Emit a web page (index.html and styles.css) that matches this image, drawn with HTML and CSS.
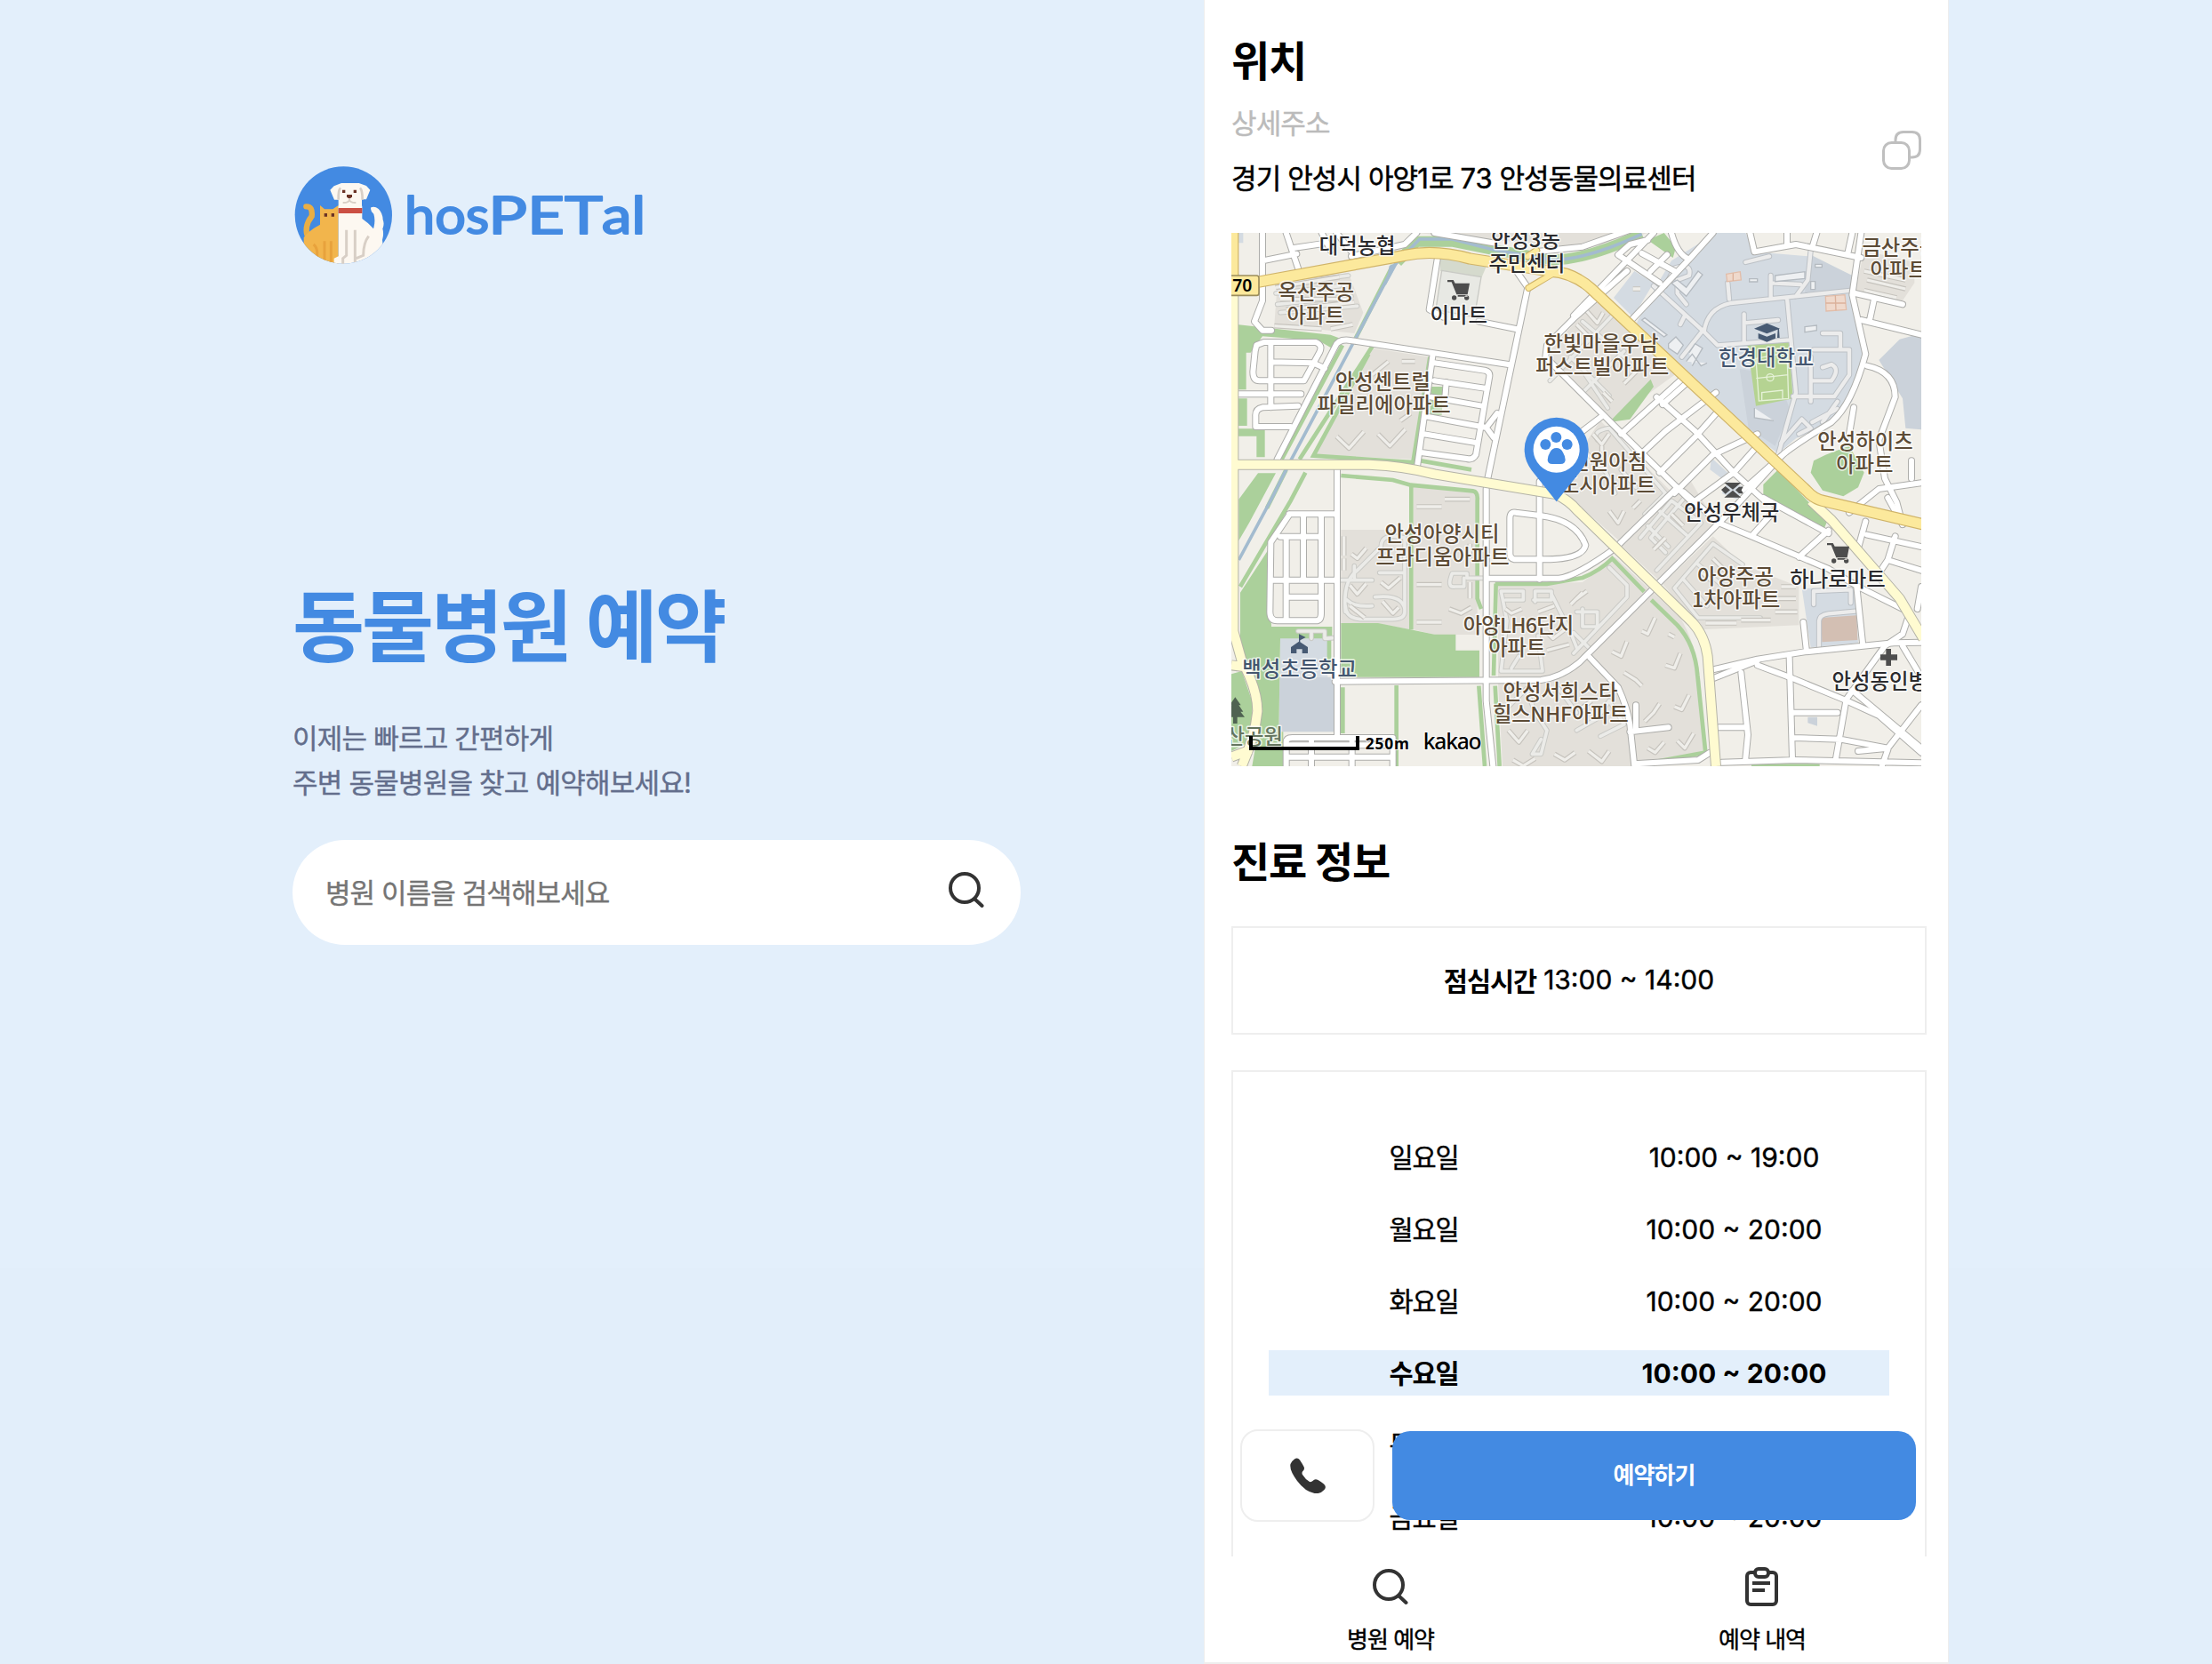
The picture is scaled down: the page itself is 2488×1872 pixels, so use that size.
FILE: index.html
```html
<!DOCTYPE html>
<html lang="ko">
<head>
<meta charset="utf-8">
<title>hosPETal</title>
<link rel="stylesheet" href="styles.css">
</head>
<body>
<main class="hero">
  <svg class="logo" viewBox="57 51 1200 330" role="img" aria-label="hosPETal">
    <defs><clipPath id="disc"><circle cx="229" cy="216" r="164"/></clipPath></defs>
    <circle cx="229" cy="216" r="164" fill="#438ae2"/>
    <g clip-path="url(#disc)">
      <path d="M103 187 Q126 186 122 220 Q98 250 106 282" fill="none" stroke="#e9ae45" stroke-width="19" stroke-linecap="round"/>
      <path d="M150 183 L165 196 H193 L212 183 V385 H95 V292 Q112 268 150 248Z" fill="#f2b54c"/>
      <path d="M128 315 Q142 326 140 350 V380 M165 304 V380 M187 304 V380" fill="none" stroke="#e8a23c" stroke-width="9"/>
      <path d="M164 210h10v11h-10zM188 210h10v11h-10z" fill="#6b3325"/>
      <path d="M212 185 H292 V228 Q315 244 330 262 Q338 235 331 212 Q318 200 322 190 Q334 184 347 195 Q361 208 362 232 Q368 245 361 262 Q366 280 360 300 L370 385 H197 V362 L212 355Z" fill="#fdf8f1"/>
      <path d="M222 108 H281 L306 117 L319 131 L306 163 H291 V194 H212 V164 H198 L184 131 L197 118Z" fill="#fdf8f1"/>
      <path d="M219 124 Q211 132 212 164 M285 124 Q293 132 293 164" fill="none" stroke="#d8cfc6" stroke-width="8"/>
      <path d="M249 157 V165 Q246 175 227 174 M249 165 Q253 175 271 174" fill="none" stroke="#d8cfc6" stroke-width="6"/>
      <path d="M225 131h10v10h-10zM263 131h10v10h-10z" fill="#6b3325"/>
      <path d="M240 147 H258 V154 L253 159 H245 L240 154Z" fill="#6b3325"/>
      <path d="M212 192H292V210H212z" fill="#cb4f43"/>
      <path d="M239 266 V352 L227 362 V382 M268 266 V375 M314 287 Q296 310 296 352 L272 362" fill="none" stroke="#d8cfc6" stroke-width="9"/>
    </g>
    <g class="wordmark">
      <text x="435" y="279" textLength="286" lengthAdjust="spacingAndGlyphs">hos</text>
      <text x="718" y="279" textLength="386" lengthAdjust="spacingAndGlyphs">PET</text>
      <text x="1100" y="279" textLength="149" lengthAdjust="spacingAndGlyphs">al</text>
    </g>
  </svg>

  <h1 class="hero-title">동물병원 예약</h1>
  <p class="hero-copy">이제는 빠르고 간편하게<br>주변 동물병원을 찾고 예약해보세요!</p>
  <div class="search">
    <span class="search-hint">병원 이름을 검색해보세요</span>
    <svg class="icon" viewBox="0 0 40 40"><circle cx="18" cy="18" r="16"/><path d="M30 31 L37.5 38"/></svg>
  </div>
</main>

<section class="panel">
  <div class="content">
    <h2 class="heading">위치</h2>
    <div class="address-row">
      <div>
        <p class="address-label">상세주소</p>
        <p class="address">경기 안성시 아양<span class="num">1</span>로 <span class="num">73</span> 안성동물의료센터</p>
      </div>
      <svg class="copy" viewBox="0 0 44 44"><path d="M15 12 V10.5 Q15 1.5 24 1.5 H33.5 Q42.500 1.500 42.500 10.500 V21 Q42.500 30 33.500 30 H32"/><rect x="1.500" y="13.500" width="29" height="29" rx="9"/></svg>
    </div>

    <svg class="map" viewBox="15 21 2328 1800">
      <defs>
        <g id="paths">
          <path d="M170 195L410 165M165 225L380 200M170 262L420 235M180 290L440 268"/>
          <path d="M1090 520L1300 300M1200 560L1340 420M1160 440L1290 570M1200 320L1340 440M1210 500L1285 612"/>
          <path d="M400 1300Q390 1195 440 1160L520 1080Q520 1030 600 1050V1300Q600 1325 560 1325H450Q400 1320 400 1280M385 1193H490M430 1190V1145M515 1168H600M500 1250Q590 1240 600 1290M405 1260Q430 1285 490 1280"/>
          <path d="M865 1186H810V1170H760Q740 1220 770 1215H800V1186"/>
          <path d="M925 1230H1000V1260H940M925 1230L945 1330L925 1500H1065L1050 1380M1035 1260H1095V1230H1040V1265M1095 1240L1160 1370L1180 1420M960 1490L985 1450"/>
          <path d="M930 1640L1010 1560L1040 1640L1080 1700L1060 1780H1030L1060 1730M1120 1560L1180 1640M1180 1700L1250 1660L1290 1600L1340 1680L1260 1720M1180 1300H1250V1350H1200V1290M1170 1440L1350 1250V1210L1290 1150M1170 1370L1220 1420"/>
          <path d="M1395 1050L1500 925L1600 1000L1450 1160M1420 1010L1490 1080M1460 960L1550 1040M1540 920L1430 1050L1480 1100M1510 1220L1640 1070L1740 1140M1510 1220L1590 1320H1800M1540 1190L1620 1280M1590 1140L1670 1210"/>
          <path d="M1250 720Q1230 690 1290 680L1480 900L1410 970M1210 760L1280 830L1310 900M1330 820L1380 880"/>
          <path d="M240 1365H330V1390L360 1388M285 1365V1390"/>
        </g>
        <g id="campus">
          <path d="M1440 200L1610 355L1655 400L1900 382M1610 355Q1620 275 1700 258L2110 215M1610 345L1535 440M1480 200L1510 140Q1570 120 1560 165L1520 180V225L1550 262M1890 240L1920 560L1860 770M1970 80L1960 180L1920 235M1835 165V240M1835 190L1935 195M1745 295V390M1745 325L1860 315M1690 190L1695 245M1530 330L1545 300"/>
          <path d="M1910 573H2050L2100 500V415H1980M2070 410V360H2010M1970 440V590M1970 520H2040Q2070 480 2040 465L2010 475M1975 660L2060 615M1870 730L1940 650L1970 680L1930 700M2060 590L2010 660M1750 120L1830 100"/>
          <path d="M1980 1275V1230L2105 1225V1270M1998 1418V1330Q2000 1310 2030 1306L2120 1298"/>
        </g>
        <g id="streets">
          <path d="M120 21V250L93 320L120 350H150M200 21L240 140M120 115L235 92M225 72L320 58M320 21L350 80M420 100L600 60L640 21M370 21L425 90"/>
          <path d="M710 110L683 280L730 305M850 320L975 345M970 140L1015 205L880 850M700 21L900 55M1040 85L1200 68L1420 -10"/>
          <path d="M100 400L125 390H300Q325 400 312 425L260 520H110Q88 520 88 490L95 420ZM148 390V610M148 457L290 460L330 478M30 565H250M240 605L120 610Q95 615 97 640V675H215M170 785L365 405Q375 380 410 383L950 465"/>
          <path d="M695 430L642 810M700 460L870 485Q890 490 885 510L840 770Q830 788 810 783L655 762M700 520L870 545M740 525L735 590M690 575L860 605M670 640L875 678L912 630M665 700L845 730M875 678L900 712"/>
          <path d="M372 820V1718M875 885V1600L898 1821M1055 860V1190M210 970H372M212 970L148 1065L145 1300Q145 1330 170 1330H300Q318 1330 318 1305V970M258 970V1193M180 1046H310M150 1193H372M200 1050V1320M200 1250H318"/>
          <path d="M955 985Q955 960 975 965L1055 975Q1180 990 1210 1075Q1200 1125 1060 1123H970Q955 1120 955 1105ZM885 1187H1120Q1180 1180 1310 1085L1520 880M365 1535L1060 1530Q1130 1520 1190 1470L1715 945L1870 775Q1900 745 2040 660Q2110 600 2155 430L2110 230L2140 21"/>
          <path d="M200 1821V1740Q200 1725 220 1725H560V1821M200 1750H560M285 1725V1821M200 1790H560M422 1725V1821"/>
          <path d="M1350 150L1170 310L1080 400L1075 440L1330 695L1580 940M1170 300L1440 21M1370 310L1560 110L1640 21M1320 95L1460 190M1320 95L1360 60L1420 45M1400 90L1510 150M1430 150L1485 95M1500 21Q1520 95 1560 110"/>
          <path d="M1450 575L1580 690L1710 830L1820 930M1330 700L1540 510M1200 690L1265 640M1395 770L1480 690L1650 560M1460 830L1580 710L1660 620M1510 900L1640 770L1790 700M1560 940L1710 830L1790 740M1470 600L1560 520M1740 890L1870 775"/>
          <path d="M1765 21L1780 85L1920 60L2140 105M1890 21V60M1990 21L1975 70M2110 21L2095 90M2120 225L2280 262M2185 240L2170 310M2140 315L2343 365M2160 470Q2255 490 2255 575L2200 720L2220 850L2260 930L2280 1005M2115 610L2100 700M2310 790V850M2100 965L2200 885L2343 865"/>
          <path d="M1540 895L1660 1000L1770 1045L2030 1155L2130 1215L2290 1295M1770 1045L1860 945M1930 1115L2030 1025M1810 915L2030 1035M2125 1215L2145 1405M1945 1335L1955 1425M1640 1495L1790 1460L1950 1435L2250 1405L2343 1403M1640 1525L1790 1465M1790 1480L1910 1525L2080 1595L2200 1650L2343 1775"/>
          <path d="M1735 1505L1758 1715L1750 1795M1898 1455L1908 1795M1660 1690H1750M1910 1640H2060M1910 1725L2070 1730L2230 1760L2130 1770M2220 1415L2090 1595L2055 1795M2280 1415L2343 1520M2110 1565L2343 1760M2230 1765L2210 1821M2343 1615L2230 1760M1670 1808L1920 1800L2343 1810M2300 1315L2280 1375L2220 1415"/>
          <path d="M2155 995L2130 1085M2160 1040L2343 1080M2230 915L2280 1005M2255 1045L2230 1125L2343 1160M2230 1125L2210 1155M2343 1215L2330 1290M1225 1455L1320 1555Q1350 1620 1360 1680L1375 1821M1360 1705L1490 1690M1380 1615V1700M1375 1813L1590 1800L1630 1775"/>
        </g>
        <path id="pale" d="M22 160V1365L50 1465Q103 1560 103 1635Q95 1720 50 1821M15 1480L55 1485M15 1790L80 1765M20 803H480Q600 808 700 835L1110 903Q1155 925 1180 955L1570 1335Q1612 1380 1622 1450L1650 1821M1970 925L2040 990L2270 1255L2350 1390"/>
        <path id="trunk" d="M20 21V200M60 195L600 97Q700 75 820 108L1090 150Q1170 155 1230 210L1955 890Q1980 918 2010 925L2350 1005"/>
        <g id="houses">
          <path d="M165 205L380 170M180 245H410M200 280L430 255M160 335L320 345M350 345L425 330"/>
          <path d="M370 708L412 748L462 692M510 700L550 740L602 684M490 500L545 455M590 455H635M585 655L620 630"/>
          <path d="M640 945H725M640 1208H725M640 1335H725M735 920H820M820 1070V1120M820 1200V1255M750 1290L790 1305L825 1285M395 1045V1110M395 1120V1160M420 1105L440 1120L470 1085M520 1200L545 1220L585 1185M415 1210L440 1240L470 1205M415 1280L465 1320M525 1265L560 1305L580 1285"/>
          <path d="M940 1290L960 1305L995 1290M1050 1300L1105 1280M1080 1430L1155 1410M1080 1370L1100 1390L1140 1360M950 1700L985 1740L1015 1700M1105 1780L1140 1800L1175 1775M965 1800L1000 1820L1040 1795"/>
          <path d="M1175 1260L1215 1230M1160 1275L1200 1235M1445 1320L1420 1375L1400 1365M1350 1400L1330 1450L1300 1435M1490 1375L1510 1385M1530 1440L1510 1490L1480 1480M1340 1505L1380 1530L1400 1550M1410 1670L1440 1640L1460 1610M1510 1620L1535 1630L1560 1580M1420 1760L1445 1775L1475 1740M1520 1735L1545 1760L1575 1710M1220 1770L1265 1805L1290 1770M1190 1630L1230 1600"/>
          <path d="M1615 1338H1720M1735 1328H1835M1850 1300H1925M1850 1255H1920M1870 1215H1920M1600 1165L1635 1195M1640 1120L1680 1160M1440 1090L1480 1050M1500 970L1540 1010"/>
          <path d="M1210 280L1250 325L1270 290M1180 330L1220 370M1270 560L1300 590M1340 530L1390 480M1235 700L1265 735L1290 700M1265 740V760M1290 960L1320 1000L1340 960M1370 950L1395 925"/>
          <path d="M2160 180L2290 210M2150 150L2290 180M2150 215L2260 240M1370 210H1395"/>
        </g>
      </defs>

      <rect x="15" y="21" width="2328" height="1800" fill="#f1efe9"/>
      <g fill="#e3e0da">
        <path d="M170 195L410 155L460 290L430 360L160 330ZM490 410L685 440L635 785L295 770ZM640 21H1420L1300 60L1190 70L900 45ZM1075 435L1250 240L1525 490L1290 660Z"/>
        <path d="M385 1023H620V1360L510 1340L385 1338ZM630 875L845 895V1377H700L630 1360ZM1260 655L1510 905L1340 1075L1200 950L1110 880Z"/>
        <path d="M1330 1075L1560 850L1650 1000L1470 1205ZM1470 1205L1640 1045L1740 1140L1930 1215V1345L1600 1360ZM915 1210L1200 1200L1310 1115L1530 1320Q1590 1420 1600 1560L1610 1780L1375 1821H930L915 1540ZM2150 80L2320 120V190L2270 265L2120 220Z"/>
      </g>
      <g fill="#d4dbe2">
        <path d="M1500 115L1650 21H1750L1780 85L1960 100L2110 165V220L2145 420L2110 590Q2060 650 1920 715L1860 765L1770 700L1380 330L1455 190ZM1305 240L1375 150L1440 190L1370 305Z"/>
        <path d="M180 1352H340V1520H180ZM1940 1220H2120L2130 1405L1970 1420ZM1635 780L1690 830L1670 850L1630 820ZM1690 860L1750 880L1720 920L1670 900ZM15 21H55V55H20Z"/>
      </g>
      <path d="M2343 360L2270 380L2200 450L2280 580L2290 680L2343 685ZM178 1520H360V1705H175ZM1730 480L1860 500L1900 620L1850 740L1760 680ZM1960 90L2110 165V210L1950 225ZM1960 1655H1992V1685L1960 1675Z" fill="#cbd2da"/>
      <path d="M720 105L875 135L860 170L720 150Z" fill="#d5dacd"/>
      <path d="M725 148L858 170L835 305L705 280Z" fill="#e8e9e4" stroke="#c9cac5" stroke-width="4"/>
      <path d="M2005 1320L2125 1312L2128 1395L2008 1402Z" fill="#d3bfb3"/>

      <g fill="#abd09b">
        <path d="M33 330L350 365L390 380L350 408L310 385L120 370L80 425H65V550H33ZM35 580H68V672H35ZM33 682H128V778H100V707H33ZM690 540H730L725 635H685ZM105 832H165L75 1000L40 1060V920Z"/>
        <path d="M45 1235L140 1090L150 1350H355V1390H180L175 1705H190V1821H85L115 1645L45 1430ZM15 1510L50 1500L88 1610L75 1740L15 1770Z"/>
        <path d="M385 1338H510L620 1360L700 1376H772V1430H852V1520H385Z"/>
        <path d="M1420 45L1475 21L1515 70L1505 105ZM1430 515L1440 540L1360 650L1290 660ZM1810 870L1860 820L2025 995L2015 1020L1810 910ZM2020 770L1980 790L1970 830L2010 890L2080 910L2130 880L2150 830L2100 740Z"/>
      </g>
      <g class="belt">
        <path d="M560 130L430 385M390 400L185 785M490 405L245 785M478 430L292 773L628 795L685 440M655 790L825 820M265 830L215 925L45 1215M200 820L135 950"/>
        <path d="M385 840L560 855L620 872L830 892Q848 895 845 925V1255L858 1290M622 870V1360M908 1205L900 1515M850 1550L870 1821M905 1550L920 1821M572 1548V1821M391 1555V1710M345 1350V1510"/>
        <path d="M905 1206H1080L1200 1185Q1260 1160 1300 1120L1408 1232M1432 1260L1520 1345Q1580 1410 1588 1515L1615 1775L1395 1815M1770 1820H2000"/>
      </g>
      <path d="M575 120L640 50L760 50L900 78L1100 112Q1220 110 1400 25" fill="none" stroke="#abd09b" stroke-width="36"/>
      <path d="M40 1125L150 920L215 790L430 385L565 130L650 42H760L900 78L1100 112Q1220 110 1400 25" fill="none" stroke="#a3bbcf" stroke-width="11"/>
      <path d="M548 132L580 118L535 200Z" fill="#a3bbcf"/>

      <path d="M1755 390L1895 375L1910 580L1785 605Z" fill="#b5d392"/>
      <path d="M1785 445L1890 425L1895 580L1795 588ZM1786 512L1893 500M1805 588V560L1875 552V582" fill="none" stroke="#e6f2d8" stroke-width="4"/>
      <circle cx="1833" cy="509" r="12" fill="none" stroke="#e6f2d8" stroke-width="4"/>

      <use href="#paths" class="path-case"/><use href="#paths" class="path-fill"/>
      <use href="#campus" class="campus-case"/><use href="#campus" class="campus-fill"/>
      <use href="#houses" class="house-case"/><use href="#houses" class="house-fill"/>
      <g fill="#eef0f2" stroke="#b4bac0" stroke-width="4">
        <path d="M1500 190L1520 180L1550 205L1590 150L1605 162L1550 235ZM1400 315L1410 308L1485 365L1475 372ZM1850 165L1950 152V175L1850 185ZM1490 395L1515 372L1540 400L1520 430L1490 410ZM1970 185H1985V212H1970ZM1950 338L1990 333V350L1950 356ZM1780 612V645L1845 655M1763 176H1790V186H1763ZM1550 455L1570 430L1600 470L1620 460M1560 425L1580 395L1605 410L1570 470M1985 127H2008V137H1985Z"/>
      </g>
      <path d="M1685 160L1732 152L1735 180L1688 185ZM2020 235L2085 230L2090 280L2022 285Z" fill="#efd9cc" stroke="#e2bda9" stroke-width="4"/>
      <path d="M2053 232L2055 283M2020 258H2088M1708 157V183" stroke="#dbb19b" stroke-width="4"/>

      <use href="#streets" class="street-case"/><use href="#streets" class="street-fill"/>
      <use href="#pale" class="pale-case"/><use href="#pale" class="pale-fill"/>
      <path d="M1018 207L1100 158M1015 100L1045 80" stroke="#d0b469" stroke-width="24" stroke-linecap="round"/>
      <use href="#trunk" class="trunk-case"/><use href="#trunk" class="trunk-fill"/>
      <path d="M1018 207L1105 156M1015 100L1045 80" stroke="#fce99c" stroke-width="17" stroke-linecap="round"/>

      <rect x="-10" y="165" width="118" height="67" rx="8" fill="#fce99c" stroke="#9b8d5c" stroke-width="5"/>
      <text class="badge" x="52" y="218">70</text>

      <g fill="#4d4d4d">
        <path id="cart" d="M744 180H764L770 191H819L812 229H775L758 187H744ZM779 231H812V236H779ZM759 240a8 8 0 1 0 16 0a8 8 0 1 0-16 0M801 240a8 8 0 1 0 16 0a8 8 0 1 0-16 0"/>
        <use href="#cart" x="1281" y="888"/>
        <path d="M1678 864H1735L1707 887ZM1678 914H1735L1707 890ZM1668 888L1682 876L1698 889L1682 902ZM1716 889L1728 878H1742L1736 889L1742 900H1728Z"/>
        <path d="M2224 1425H2241V1444H2262V1463H2241V1482H2224V1463H2205V1444H2224Z"/>
      </g>
      <g fill="#475a73">
        <path d="M1779 344L1822 326L1866 344L1822 361ZM1793 360L1822 371L1851 360V377L1822 389L1793 377ZM1859 346H1863L1865 375H1857Z"/>
        <path d="M243 1375L266 1386L247 1396V1402L273 1419V1440H254V1426H235V1440H216V1419L243 1400Z"/>
      </g>
      <path d="M28 1588L47 1615H40L55 1637H46L60 1655H35V1677H21V1655H-5L8 1637H1L16 1615H9Z" fill="#506352"/>

      <g class="place apt">
        <text x="301" y="246">옥산주공</text><text x="299" y="324">아파트</text>
        <text x="526" y="548">안성센트럴</text><text x="530" y="626">파밀리에아파트</text>
        <text x="1263" y="419">한빛마을우남</text><text x="1266" y="497">퍼스트빌아파트</text>
        <text x="2154" y="749">안성하이츠</text><text x="2152" y="828">아파트</text>
        <text x="1288" y="818">신원아침</text><text x="1285" y="897">도시아파트</text>
        <text x="726" y="1061">안성아양시티</text><text x="728" y="1139">프라디움아파트</text>
        <text x="984" y="1370" textLength="374">아양LH6단지</text><text x="979" y="1446">아파트</text>
        <text x="1125" y="1596">안성서희스타</text><text x="1126" y="1672" textLength="458">힐스NHF아파트</text>
        <text x="1716" y="1207">아양주공</text><text x="1718" y="1284">1차아파트</text>
        <text x="2272" y="97">금산주공</text><text x="2267" y="172">아파트</text>
      </g>
      <g class="place poi">
        <text x="440" y="89">대덕농협</text><text x="1008" y="68">안성3동</text><text x="1012" y="151">주민센터</text>
        <text x="782" y="324">이마트</text><text x="1703" y="991">안성우체국</text><text x="2061" y="1214">하나로마트</text><text x="2235" y="1559">안성동인병원</text>
      </g>
      <g class="place school"><text x="1820" y="467">한경대학교</text><text x="245" y="1519">백성초등학교</text></g>
      <g class="place park"><text x="92" y="1747">산공원</text></g>

      <path d="M81 1719V1761H441V1719" fill="none" stroke="#000" stroke-width="12"/>
      <text class="scale" x="467" y="1765" textLength="148">250m</text>
      <text class="brand" x="662" y="1765" textLength="198">kakao</text>

      <path d="M1112 928L1028 822Q1004 790 1004 752A108 108 0 0 1 1220 752Q1220 790 1196 822Z" fill="#438ae2"/>
      <circle cx="1112" cy="752" r="78" fill="#fff"/>
      <g fill="#438ae2"><circle cx="1075" cy="735" r="18"/><circle cx="1111" cy="711" r="18"/><circle cx="1148" cy="735" r="18"/>
      <path d="M1112 747Q1127 747 1134 762Q1142 775 1142 787Q1142 801 1126 801H1098Q1082 801 1082 787Q1082 775 1090 762Q1097 747 1112 747Z"/></g>
    </svg>

    <h2 class="heading info">진료 정보</h2>
    <div class="box lunch"><strong>점심시간</strong><span class="time">13:00 ~ 14:00</span></div>
    <div class="box hours">
      <div class="day"><span>일요일</span><span class="time">10:00 ~ 19:00</span></div>
      <div class="day"><span>월요일</span><span class="time">10:00 ~ 20:00</span></div>
      <div class="day"><span>화요일</span><span class="time">10:00 ~ 20:00</span></div>
      <div class="day today"><span>수요일</span><span class="time">10:00 ~ 20:00</span></div>
      <div class="day"><span>목요일</span><span class="time">10:00 ~ 20:00</span></div>
      <div class="day"><span>금요일</span><span class="time">10:00 ~ 20:00</span></div>
      <div class="day"><span>토요일</span><span class="time">10:00 ~ 19:00</span></div>
    </div>
  </div>

  <div class="actions">
    <div class="call"><svg viewBox="0 0 40 40"><path d="M5 1.500Q8.500-1 11 2.500Q14 7 15.500 10Q17 13 14 15.500Q13 17 14 19Q17 24 22 27Q24 27.500 25.500 26Q28 23 31.500 25Q35 27 38 29.500Q41.500 32.500 38.500 36Q34 41 27.500 40Q17 38 8 26Q-1 14 .5 7Q1.500 4 5 1.500Z" fill="#333"/></svg></div>
    <div class="reserve">예약하기</div>
  </div>
  <nav class="tabs">
    <div class="tab"><svg class="icon" viewBox="0 0 40 40"><circle cx="18" cy="18" r="16"/><path d="M30 31 L37.500 38"/></svg><span>병원 예약</span></div>
    <div class="tab"><svg class="clip" viewBox="0 0 38 44"><rect x="2" y="6" width="33" height="36" rx="4"/><rect x="11" y="2" width="15" height="9" rx="4" fill="#fff"/><path d="M8 18H28M8 26H22"/></svg><span>예약 내역</span></div>
  </nav>
</section>
</body>
</html>
```
FILE: styles.css
```css
* { box-sizing: border-box; margin: 0; padding: 0; }

body {
  display: flex;
  width: 2488px;
  height: 1872px;
  overflow: hidden;
  background: linear-gradient(#e3effb 0 1427px, #e2eefa 1427px);
  color: #000;
  font-family: Inter, "Noto Sans CJK KR", sans-serif;
  font-weight: 400;
}

.hero { width: 1354px; padding: 187px 0 0 329px; }
.logo { display: block; width: 400px; height: 110px; }
.wordmark {
  font: 400 176px Lato, sans-serif;
  fill: #438ae2;
  stroke: #438ae2;
  stroke-width: 6;
  stroke-linejoin: round;
}
.hero-title {
  margin-top: 353px;
  font-size: 88px;
  line-height: 110px;
  font-weight: 700;
  letter-spacing: -0.034em;
  color: #438ae2;
}
.hero-copy {
  margin-top: 46px;
  font-size: 31px;
  line-height: 50px;
  letter-spacing: -0.025em;
  color: #636e8c;
  -webkit-text-stroke: .4px #636e8c;
}
.search {
  display: flex;
  align-items: center;
  justify-content: space-between;
  width: 819px;
  height: 118px;
  margin-top: 39px;
  padding: 0 41px 0 37px;
  border-radius: 59px;
  background: #fff;
}
.search-hint {
  margin-top: -3px;
  font-size: 31px;
  letter-spacing: -0.029em;
  color: #757575;
  -webkit-text-stroke: .4px #757575;
}
.icon { width: 40px; height: 40px; fill: none; stroke: #333; stroke-width: 4; stroke-linecap: round; }
.search .icon { margin-top: -6px; }

.panel {
  position: relative;
  width: 838px;
  height: 1872px;
  overflow: hidden;
  background: #fff;
  border: 1px solid #eee;
  border-top: 0;
  border-bottom-width: 2px;
}
.content { padding: 34px 24px 0 30px; }
.heading { font-size: 47px; line-height: 70px; font-weight: 700; letter-spacing: -0.026em; }
.address-row {
  display: flex;
  align-items: center;
  justify-content: space-between;
  width: 776px;
  height: 130px;
}
.address-row p { padding-top: 1px; font-size: 31px; line-height: 61px; letter-spacing: -0.028em; }
.address-row .address-label { color: #bbb; -webkit-text-stroke: .4px #bbb; }
.address-row .address { -webkit-text-stroke: .5px #000; }
.num { letter-spacing: 0; }
.copy { width: 44px; height: 44px; fill: none; stroke: #bfbfbf; stroke-width: 3; }

.map { display: block; width: 776px; height: 600px; margin-top: 28px; }
.belt { fill: none; stroke: #abd09b; stroke-width: 14; }
#paths, #campus, #streets, #houses, #pale, #trunk { fill: none; stroke-linejoin: round; }
.path-case, .campus-case, .street-case { stroke-linecap: round; }
.path-fill, .campus-fill, .street-fill { stroke-linecap: round; }
.path-case { stroke: #cacac6; stroke-width: 17; }
.path-fill { stroke: #ebebe8; stroke-width: 11; }
.campus-case { stroke: #bcc1c6; stroke-width: 19; }
.campus-fill { stroke: #ececec; stroke-width: 13; }
.house-case { stroke: #c6c3bd; stroke-width: 17; }
.house-fill { stroke: #efeeea; stroke-width: 10; }
.street-case { stroke: #adadaa; stroke-width: 24; }
.street-fill { stroke: #fff; stroke-width: 18; }
.pale-case { stroke: #b4b3a8; stroke-width: 36; }
.pale-fill { stroke: #fffbd1; stroke-width: 30; }
.trunk-case { stroke: #d0b469; stroke-width: 40; }
.trunk-fill { stroke: #fce99c; stroke-width: 33; }
.place {
  font: 500 70px "Noto Sans CJK KR", sans-serif;
  text-anchor: middle;
  paint-order: stroke;
  stroke: rgba(255, 255, 255, .75);
  stroke-width: 9;
  stroke-linejoin: round;
}
.apt { fill: #5c4b36; }
.poi { fill: #2b2b2e; }
.school { fill: #44566f; }
.park { fill: #65755f; }
.badge { font: 600 58px "Noto Sans", sans-serif; text-anchor: middle; }
.scale { font: 700 52px "Noto Sans", sans-serif; paint-order: stroke; stroke: #fff; stroke-width: 5; }
.brand { font: 500 74px "Noto Sans", sans-serif; paint-order: stroke; stroke: #fff; stroke-width: 5; }

.info { margin-top: 73px; }
.box { width: 782px; border: 2px solid #eee; font-size: 29.5px; letter-spacing: -0.036em; -webkit-text-stroke: .4px #000; }
.lunch {
  display: flex;
  align-items: center;
  justify-content: center;
  gap: 8px;
  height: 122px;
  margin-top: 37px;
  padding-bottom: 3px;
}
.lunch strong { font-weight: 700; -webkit-text-stroke: 0; }
.time { font-size: 30px; letter-spacing: 0; }
.hours {
  display: flex;
  flex-direction: column;
  gap: 30px;
  margin-top: 40px;
  padding: 70px 40px;
}
.day {
  display: grid;
  grid-template-columns: 1fr 1fr;
  height: 51px;
  line-height: 53px;
  text-align: center;
}
.today { background: #e3effb; font-weight: 700; -webkit-text-stroke: 0; }

.actions {
  position: absolute;
  left: 40px;
  bottom: 158px;
  display: flex;
  align-items: center;
  gap: 20px;
}
.call {
  display: flex;
  align-items: center;
  justify-content: center;
  width: 151px;
  height: 104px;
  border: 2px solid #eee;
  border-radius: 20px;
  background: #fff;
}
.call svg { width: 40px; height: 40px; }
.reserve {
  width: 589px;
  height: 100px;
  border-radius: 20px;
  background: #438ae2;
  color: #fff;
  font-size: 26px;
  font-weight: 700;
  letter-spacing: -0.035em;
  line-height: 99px;
  text-align: center;
}
.tabs {
  position: absolute;
  left: 0;
  right: 0;
  bottom: 0;
  display: grid;
  grid-template-columns: 1fr 1fr;
  height: 119px;
  background: #fff;
}
.tab {
  display: flex;
  flex-direction: column;
  align-items: center;
  padding-top: 12px;
  font-size: 26px;
  letter-spacing: -0.04em;
  -webkit-text-stroke: .4px #000;
}
.tab svg { height: 44px; }
.tab span { margin-top: 20px; line-height: 36px; }
.clip { width: 38px; fill: none; stroke: #333; stroke-width: 4; }
```
